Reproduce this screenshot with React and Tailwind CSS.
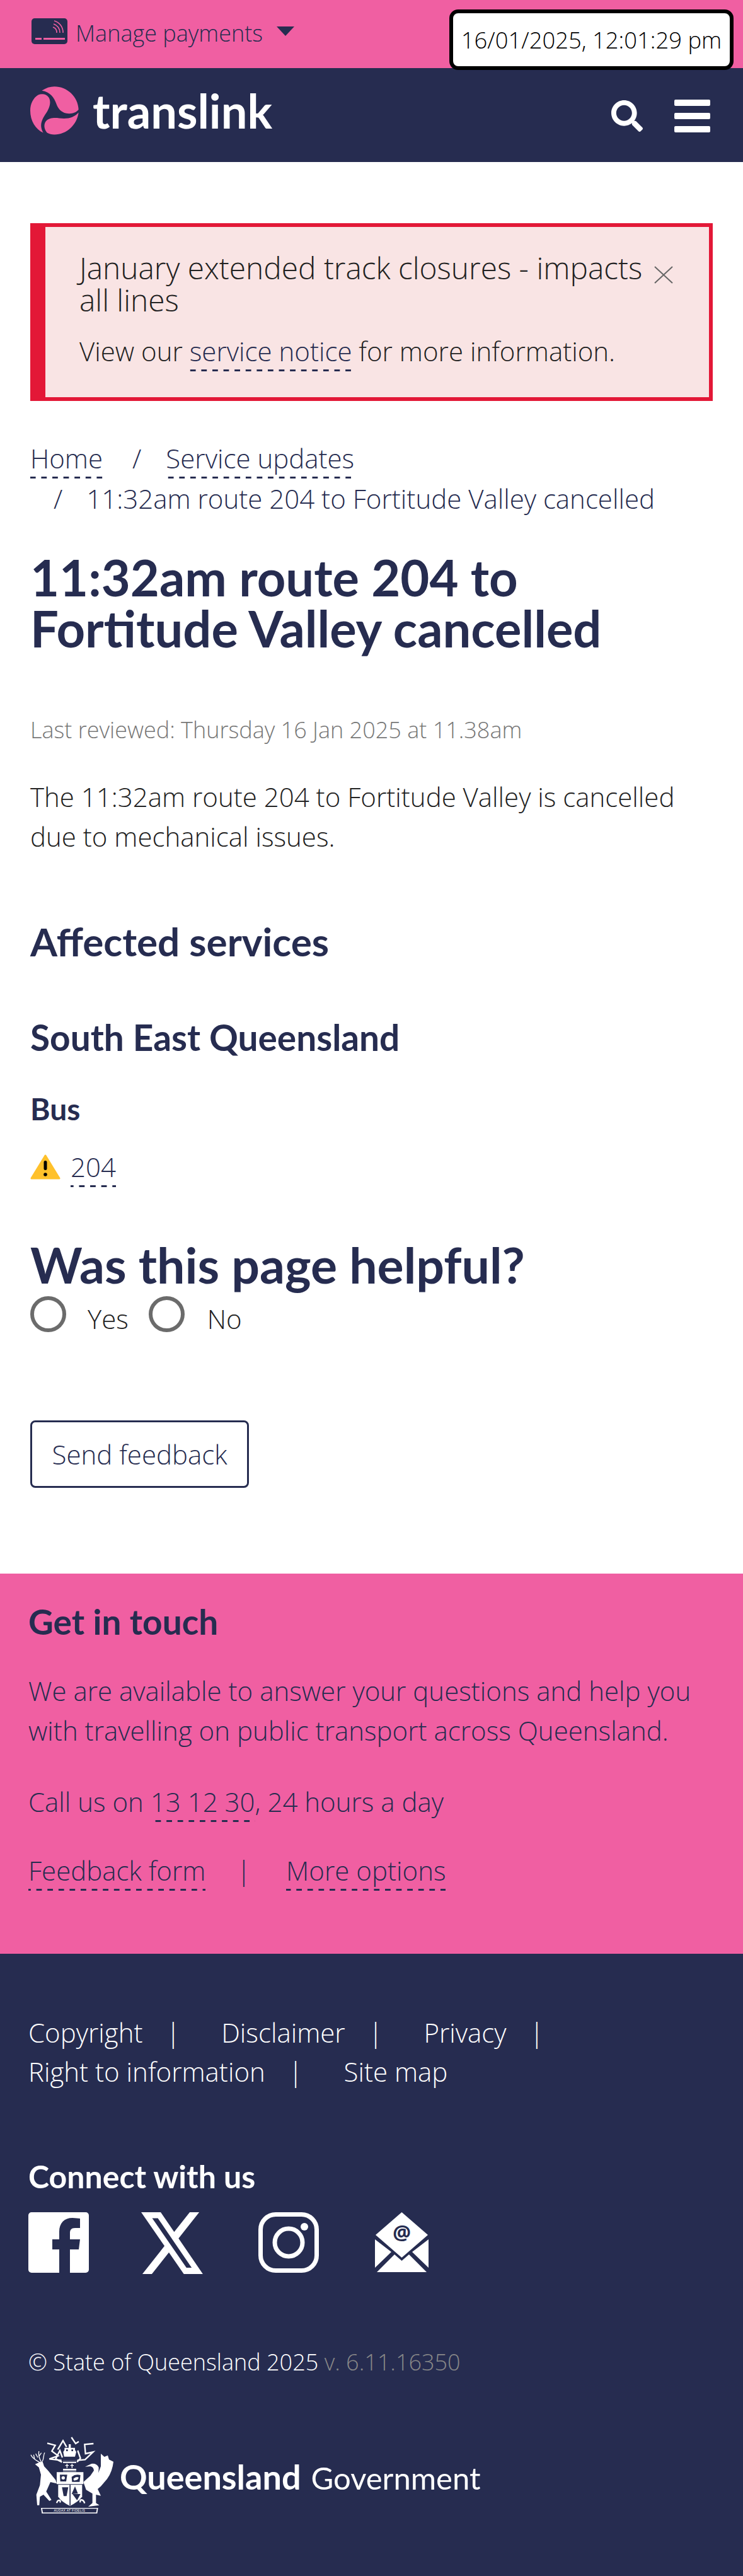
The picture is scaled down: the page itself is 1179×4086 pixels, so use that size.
import { FaSearch } from "react-icons/fa";

const body = "font-['Open_Sans','Noto_Sans',sans-serif] font-light";
const head = "font-['Lato','Noto_Sans',sans-serif] font-bold text-[#262c50]";
const dashed = "bg-[linear-gradient(90deg,transparent_25%,#262c50_25%,#262c50_75%,transparent_75%)] bg-[length:17.6px_3px] bg-bottom bg-repeat-x pb-[4px]";

function CardIcon() {
  return (
    <svg viewBox="0 0 57 41" className="h-[41px] w-[57px]">
      <rect width="57" height="41" rx="5" fill="#262c50" />
      <g fill="none" stroke="#f05fa2" strokeWidth="1.6">
        <path d="M34 14a9 9 0 0 1 6 9" />
        <path d="M35 9a14 14 0 0 1 10 14" />
        <path d="M36 4a19 19 0 0 1 14 19" />
      </g>
      <rect x="6" y="31" width="10" height="3" fill="#f05fa2" />
      <rect x="19" y="31" width="34" height="3" fill="#f05fa2" />
    </svg>
  );
}

function LogoMark() {
  return (
    <svg viewBox="10 12 231 230" className="h-[77px] w-[77px] shrink-0" fill="#f05fa2">
      <path d="M65 32C85 18 105 12 125 12C185 12 238 60 240 122C228 138 205 144 182 140C155 134 142 116 134 94C124 66 105 38 65 32Z" />
      <path d="M72 232C35 216 10 175 10 126C10 95 24 66 48 52C66 44 88 48 98 64C110 84 104 108 90 132C72 160 48 190 72 232Z" />
      <path d="M240 136C232 196 182 241 125 241C112 241 100 238 90 232C76 216 72 192 86 176C100 162 122 160 148 163C190 168 218 160 240 136Z" />
    </svg>
  );
}

function Crest() {
  return (
    <svg viewBox="0 0 420 390" className="h-[130px] w-[140px] shrink-0" fill="#fff">
      {/* stag */}
      <path d="M32 140L55 130L68 128L75 150L95 172L130 215L135 232L105 225L85 270L110 310L100 315L72 285L55 295L52 335L42 335L38 285L55 240L60 190L50 155Z" />
      <g fill="none" stroke="#fff" strokeWidth="4">
        <path d="M55 132C40 122 20 115 12 95M62 130C50 110 48 90 50 78M66 128C76 110 70 95 78 85M30 116L25 95M45 108L35 90M52 100L62 86" />
      </g>
      {/* brolga */}
      <path d="M270 152L300 138Q325 135 335 155Q335 185 328 195L345 150L345 90L362 105L378 98L384 118L405 128Q400 175 375 210L345 245L330 258L345 290L322 285L322 325L338 335L285 342L305 325L305 280L275 262L262 225L295 195L312 170Q310 152 295 150Z" />
      {/* shield */}
      <path d="M135 178H262V235H135Z" />
      <path d="M142 238H256V295Q235 322 198 338Q160 322 142 295Z" />
      <g fill="#262c50">
        <path d="M150 190H185L180 222H152ZM206 200Q225 185 248 192L244 224H208Z" />
        <path d="M196 238H201V336H196Z" />
        <path d="M160 250H190L182 292H168ZM210 282H248L232 312ZM206 282L222 245L236 280Z" />
      </g>
      <g fill="#fff">
        <circle cx="166" cy="205" r="8" />
        <path d="M214 210Q228 196 240 204L234 214L218 218Z" />
      </g>
      {/* helmet and crest */}
      <path d="M165 122H228V176H165Z" />
      <g fill="#262c50">
        <path d="M165 122H228V128H165Z" />
        <path d="M160 134H232V162H160ZM165 170H228V175H165Z" />
      </g>
      <g fill="#fff">
        <path d="M182 138H186V158H182ZM176 144H192V148H176ZM206 138H210V158H206ZM200 144H216V148H200Z" />
      </g>
      <path d="M172 62H222V72L228 82L222 104H170L166 82L172 72ZM192 45H202V62H192Z" />
      <path d="M180 70H188V78H180ZM205 70H213V78H205Z" fill="#262c50" />
      {/* mantling */}
      <g fill="none" stroke="#fff" strokeWidth="7">
        <path d="M140 70L165 28L182 58M162 108L150 75L130 115L160 130" />
        <path d="M205 12L225 42L240 32M235 75L248 112L232 130" />
        <path d="M90 40L128 50L112 78L142 100L100 115L158 122" />
        <path d="M310 42L268 46L272 90L308 82L270 118L232 122" />
        <path d="M135 325C140 305 158 310 150 322M248 322C240 305 262 305 268 326" />
      </g>
      {/* motto */}
      <path d="M60 348H332L328 374H64Z" />
      <path d="M66 352H326L323 370H69Z" fill="#262c50" />
      <text x="196" y="366" textAnchor="middle" fontSize="15" fontFamily="Liberation Sans" fill="#fff" letterSpacing="1">AUDAX AT FIDELIS</text>
    </svg>
  );
}

export default function App() {
  return (
    <div className={`${body} relative min-h-[4086px] w-[1179px] bg-white text-[42px] text-[#222]`}>
      {/* top bar */}
      <div className="flex h-[108px] items-start bg-[#f05fa2] pl-[50px] pt-[29px]">
        <CardIcon />
        <span className="ml-[13px] text-[36px] leading-[48px] text-[#262c50]">Manage payments</span>
        <svg viewBox="0 0 30 15" className="ml-[21px] mt-[13px] h-[15px] w-[30px]" fill="#262c50">
          <path d="M1 0H29L15 15Z" />
        </svg>
      </div>
      <div className="absolute right-[15px] top-[15px] flex h-[96px] w-[451px] items-center justify-center rounded-[14px] border-[6px] border-black bg-white text-[36.4px] font-light text-black">
        16/01/2025, 12:01:29 pm
      </div>

      {/* nav */}
      <div className="flex h-[149px] items-start justify-between bg-[#262c50] pl-[48px] pr-[52px] pt-[29px]">
        <div className="flex items-start">
          <LogoMark />
          <span className="ml-[22px] font-['Lato'] text-[74px] font-bold leading-[77px] text-white">translink</span>
        </div>
        <div className="flex items-start pt-[21px]">
          <FaSearch className="h-[52px] w-[50px] text-white" />
          <div className="ml-[50px] flex w-[57px] flex-col gap-[11px]">
            <div className="h-[10px] rounded-[2px] bg-white" />
            <div className="h-[10px] rounded-[2px] bg-white" />
            <div className="h-[10px] rounded-[2px] bg-white" />
          </div>
        </div>
      </div>

      {/* main */}
      <div className="px-[48px]">
        <div className="relative mt-[97px] border-[6px] border-l-[24px] border-[#e31837] bg-[#f9e4e4] pb-[42px] pl-[54px] pr-[88px] pt-[39px]">
          <p className="text-[47.8px] leading-[51px]">January extended track closures - impacts all lines</p>
          <svg viewBox="0 0 30 28" className="absolute right-[57px] top-[62px] h-[28px] w-[30px]" fill="none" stroke="#666" strokeWidth="2">
            <path d="M1 1L29 27M29 1L1 27" />
          </svg>
          <p className="mt-[25px] leading-[62px]">
            View our <span className={dashed + " text-[#262c50]"}>service notice</span> for more information.
          </p>
        </div>

        <div className="mt-[59px] flex flex-wrap leading-[64px] text-[#262c50]">
          <span><span className={dashed}>Home</span></span>
          <span className="ml-[47px]">/<span className={`${dashed} ml-[39px]`}>Service updates</span></span>
          <span className="ml-[37px]">/<span className="ml-[38px]">11:32am route 204 to Fortitude Valley cancelled</span></span>
        </div>

        <h1 className={`${head} mt-[52px] text-[79.5px] leading-[81px]`}>11:32am route 204 to Fortitude Valley cancelled</h1>

        <p className="mt-[94px] text-[36px] leading-[54px] text-[#777]">Last reviewed: Thursday 16 Jan 2025 at 11.38am</p>

        <p className="mt-[47px] leading-[63px]">The 11:32am route 204 to Fortitude Valley is cancelled due to mechanical issues.</p>

        <h2 className={`${head} mt-[95px] text-[62px] leading-[80px]`}>Affected services</h2>
        <h3 className={`${head} mt-[77px] text-[56.8px] leading-[70px]`}>South East Queensland</h3>
        <h4 className={`${head} mt-[49px] text-[48px] leading-[60px]`}>Bus</h4>

        <div className="mt-[31px] flex items-center">
          <svg viewBox="0 0 48 41" className="h-[41px] w-[48px]">
            <path d="M24 2L46 38H2Z" fill="#ffc12b" stroke="#ffc12b" strokeWidth="3" strokeLinejoin="round" />
            <rect x="21.5" y="10" width="5" height="15" rx="2.5" fill="#000" />
            <circle cx="24" cy="32" r="2.8" fill="#000" />
          </svg>
          <span className="ml-[16px] leading-[62px] text-[#262c50]"><span className={dashed}>204</span></span>
        </div>

        <h2 className={`${head} mt-[79px] text-[78.8px] leading-[90px]`}>Was this page helpful?</h2>
        <div className="mt-[5px] flex items-start">
          <div className="h-[57px] w-[57px] rounded-full border-[6px] border-[#6b6b6b]" />
          <span className="ml-[34px] mt-[5px] leading-[62px]">Yes</span>
          <div className="ml-[32px] h-[57px] w-[57px] rounded-full border-[6px] border-[#6b6b6b]" />
          <span className="ml-[36px] mt-[5px] leading-[62px]">No</span>
        </div>

        <button className="mt-[130px] flex h-[107px] w-[347px] items-center justify-center rounded-[8px] border-[3px] border-[#262c50] text-[#262c50]">Send feedback</button>
      </div>

      {/* get in touch */}
      <div className="mt-[136px] h-[603px] bg-[#f05fa2] px-[45px] pt-[46px] text-[#262c50]">
        <h3 className={`${head} text-[55px] leading-[60px]`}>Get in touch</h3>
        <p className="mt-[48px] leading-[63px]">We are available to answer your questions and help you with travelling on public transport across Queensland.</p>
        <p className="mt-[50px] leading-[63px]">Call us on <span className={dashed}>13 12 30</span>, 24 hours a day</p>
        <p className="mt-[46px] leading-[63px]">
          <span className={dashed}>Feedback form</span>
          <span className="ml-[49px] mr-[56px]">|</span>
          <span className={dashed}>More options</span>
        </p>
      </div>

      {/* footer */}
      <div className="bg-[#262c50] px-[45px] pb-[120px] pt-[94px] text-white">
        <div className="leading-[62px]">
          <div className="flex">
            <span>Copyright</span><span className="ml-[37px]">|</span>
            <span className="ml-[65px]">Disclaimer</span><span className="ml-[37px]">|</span>
            <span className="ml-[65px]">Privacy</span><span className="ml-[37px]">|</span>
          </div>
          <div className="flex">
            <span>Right to information</span><span className="ml-[37px]">|</span>
            <span className="ml-[65px]">Site map</span>
          </div>
        </div>

        <h3 className="mt-[105px] font-['Lato'] text-[50px] font-bold leading-[60px]">Connect with us</h3>

        <div className="mt-[27px] flex items-start">
          <svg viewBox="0 0 96 96" className="h-[96px] w-[96px]">
            <path fillRule="evenodd" fill="#fff" d="M5 0H91A5 5 0 0 1 96 5V91A5 5 0 0 1 91 96H66V59H80L82 43H66V33C66 28 68 25 74 25H82V10C79 10 75 9 70 9C57 9 49 17 49 31V43H38V59H49V96H5A5 5 0 0 1 0 91V5A5 5 0 0 1 5 0Z" />
          </svg>
          <svg viewBox="1.25 2.25 21.6 19.5" preserveAspectRatio="none" className="ml-[83px] h-[98px] w-[98px]" fill="#fff">
            <path d="M18.244 2.25h3.308l-7.227 8.26 8.502 11.24H16.17l-5.214-6.817L4.99 21.75H1.68l7.73-8.835L1.254 2.25H8.08l4.713 6.231zm-1.161 17.52h1.833L7.084 4.126H5.117z" />
          </svg>
          <svg viewBox="0 0 96 96" className="ml-[88px] h-[96px] w-[96px]" fill="none" stroke="#fff" strokeWidth="7">
            <rect x="3.5" y="3.5" width="89" height="89" rx="24" />
            <circle cx="48" cy="48" r="22" />
            <circle cx="73" cy="23" r="6" fill="#fff" stroke="none" />
          </svg>
          <svg viewBox="0 0 85 96" className="ml-[89px] h-[96px] w-[85px]" fill="#fff">
            <path d="M42.5 0L84 36L42.5 72L1 36Z" />
            <path d="M0 43L26 63L0 88ZM85 43L59 63L85 88ZM31 67L42.5 77L54 67L82 95H3Z" />
            <text x="42.5" y="44" textAnchor="middle" fontSize="32" fontWeight="700" fontFamily="Noto Sans" fill="#262c50">@</text>
          </svg>
        </div>

        <p className="mt-[115px] text-[36px] leading-[50px]">© State of Queensland 2025 <span className="text-[#888]">v. 6.11.16350</span></p>

        <div className="mt-[90px] flex items-start">
          <Crest />
          <div className="ml-[5px] mt-[32px] flex items-baseline font-['Lato'] leading-[70px] text-white">
            <span className="text-[54px] font-bold">Queensland</span>
            <span className="ml-[16px] text-[49px] font-normal">Government</span>
          </div>
        </div>
      </div>
    </div>
  );
}
